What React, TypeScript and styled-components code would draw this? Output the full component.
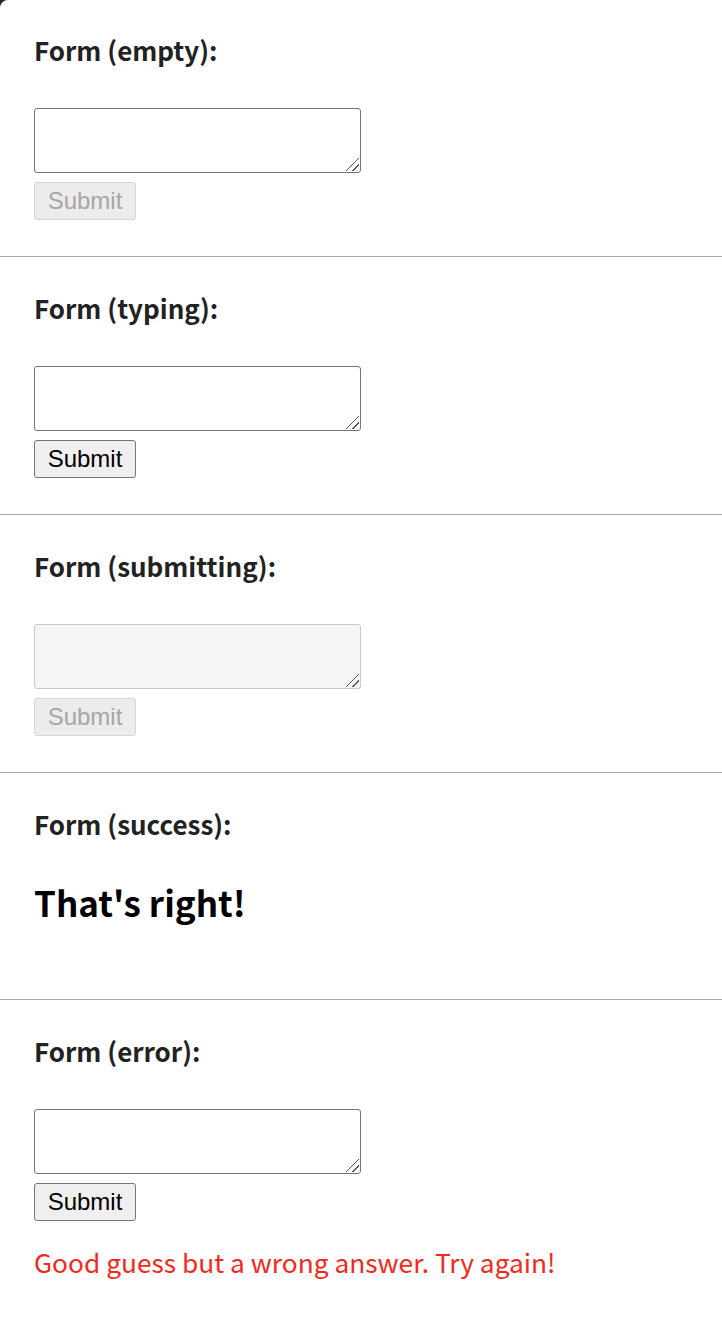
import React from "react";
import styled, { createGlobalStyle } from "styled-components";

const Global = createGlobalStyle`
  html, body { margin: 0; padding: 0; background: #fff; }
  body { font-family: "Noto Sans CJK KR", "Noto Sans", sans-serif; }
`;

const Corner = styled.div`
  position: fixed;
  top: 0;
  left: 0;
  width: 8px;
  height: 8px;
  background: radial-gradient(circle at 8px 8px, transparent 7.5px, #1f2126 8.5px);
  pointer-events: none;
`;

const Page = styled.main`
  display: flex;
  flex-direction: column;
`;

const Section = styled.section<{ $first?: boolean; $last?: boolean; $tall?: boolean }>`
  padding: ${(p) => (p.$first ? "32px" : "33px")} 34px ${(p) => (p.$tall ? "77px" : "36px")};
  border-bottom: ${(p) => (p.$last ? "none" : "1px solid #a9a9a9")};
`;

const Heading = styled.h2`
  margin: 0 0 40px;
  font-size: 26px;
  line-height: 36px;
  font-weight: 700;
  color: #222;
`;

const Form = styled.form`
  display: flex;
  flex-direction: column;
  align-items: flex-start;
  gap: 9px;
`;

const grip = (bg: string) => `
  linear-gradient(
    -45deg,
    transparent 0 4.2px,
    #555 4.2px 5.5px,
    transparent 5.5px 8.5px,
    #555 8.5px 9.8px,
    transparent 9.8px
  ) no-repeat right 1px bottom 1px / 14px 14px, ${bg}`;

const TextArea = styled.textarea`
  display: block;
  box-sizing: border-box;
  width: 327px;
  height: 65px;
  margin: 0;
  border: 1px solid #767676;
  border-radius: 3px;
  resize: none;
  background: ${grip("#fff")};
  font-family: "Liberation Mono", monospace;
  font-size: 23px;
  &:disabled {
    background: ${grip("#f5f5f5")};
    border-color: #c8c8c8;
  }
`;

const Button = styled.button`
  box-sizing: border-box;
  width: 102px;
  height: 38px;
  margin: 0;
  padding: 0;
  border: 1px solid #767676;
  border-radius: 3px;
  background: #efefef;
  color: #000;
  font-family: "Liberation Sans", Arial, sans-serif;
  font-size: 24px;
  line-height: 36px;
  &:disabled {
    color: #a6a6a6;
    border-color: #d5d5d5;
    background: #ececec;
  }
`;

const Success = styled.h1`
  margin: 0;
  font-size: 35px;
  line-height: 40px;
  font-weight: 700;
  color: #000;
`;

const ErrorText = styled.p`
  margin: 14px 0 0;
  font-size: 26.3px;
  line-height: 36px;
  color: #f4291b;
`;

type Status = "empty" | "typing" | "submitting" | "success" | "error";

function Quiz({ status, first, last }: { status: Status; first?: boolean; last?: boolean }) {
  return (
    <Section $first={first} $last={last} $tall={status === "success"}>
      <Heading>Form ({status}):</Heading>
      {status === "success" ? (
        <Success>That's right!</Success>
      ) : (
        <Form onSubmit={(e) => e.preventDefault()}>
          <TextArea disabled={status === "submitting"} />
          <Button disabled={status === "empty" || status === "submitting"}>Submit</Button>
          {status === "error" && <ErrorText>Good guess but a wrong answer. Try again!</ErrorText>}
        </Form>
      )}
    </Section>
  );
}

export default function App() {
  const statuses: Status[] = ["empty", "typing", "submitting", "success", "error"];
  return (
    <>
      <Global />
      <Page>
        {statuses.map((s, i) => (
          <Quiz key={s} status={s} first={i === 0} last={i === statuses.length - 1} />
        ))}
      </Page>
      <Corner />
    </>
  );
}
